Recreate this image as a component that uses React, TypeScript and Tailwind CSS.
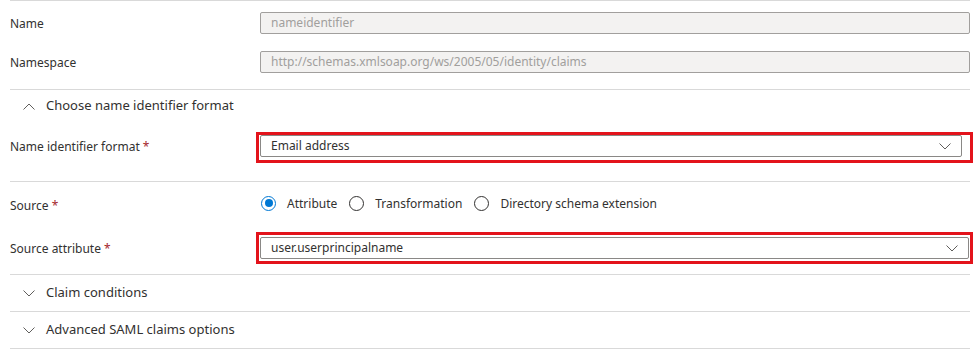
import React from "react";

const font = { fontFamily: '"Noto Sans", "Open Sans", sans-serif' };

function ChevronDown({ className = "" }: { className?: string }) {
  return (
    <svg className={className} width="12" height="7" viewBox="0 0 12 7" fill="none">
      <path d="M0.5 0.5 L6 6 L11.5 0.5" stroke="currentColor" strokeWidth="1" />
    </svg>
  );
}

function ChevronUp({ className = "" }: { className?: string }) {
  return (
    <svg className={className} width="12" height="7" viewBox="0 0 12 7" fill="none">
      <path d="M0.5 6.5 L6 1 L11.5 6.5" stroke="currentColor" strokeWidth="1" />
    </svg>
  );
}

function Label({ text, required = false, className = "" }: { text: string; required?: boolean; className?: string }) {
  return (
    <div className={"w-[250px] shrink-0 text-[12px] text-[#323130] " + className}>
      {text}
      {required && <span className="text-[#a4262c]"> *</span>}
    </div>
  );
}

function DisabledInput({ value }: { value: string }) {
  return (
    <div className="flex h-[22px] flex-1 items-center rounded-[2px] border border-[#a19f9d] bg-[#f3f2f1] px-[10px] text-[12px] text-[#a19f9d]">
      {value}
    </div>
  );
}

function Radio({ label, checked = false }: { label: string; checked?: boolean }) {
  return (
    <div className="flex items-center">
      <div
        className={
          checked
            ? "flex h-[15px] w-[15px] items-center justify-center rounded-full border border-[#0078d4]"
            : "h-[15px] w-[15px] rounded-full border border-[#323130]"
        }
      >
        {checked && <div className="h-[8px] w-[8px] rounded-full bg-[#0078d4]" />}
      </div>
      <span className="ml-[11px] pt-[1px] text-[12px] text-[#323130]">{label}</span>
    </div>
  );
}

function Divider() {
  return <div className="h-px w-full bg-[#d9d9d9]" />;
}

function Expander({ text, open = false }: { text: string; open?: boolean }) {
  return (
    <div className="flex h-[32px] items-center text-[13px] text-[#323130]">
      <div className="flex w-[36px] justify-center pl-[2px] text-[#605e5c]">
        {open ? <ChevronUp /> : <ChevronDown />}
      </div>
      <span>{text}</span>
    </div>
  );
}

export default function App() {
  return (
    <div className="h-[352px] w-[980px] bg-white" style={font}>
      <div className="ml-[10px] w-[960px]">
        <Divider />
        <div className="pb-[16px] pt-[11px]">
          <div className="flex items-center">
            <Label text="Name" className="pt-[2px]" />
            <DisabledInput value="nameidentifier" />
          </div>
          <div className="mt-[17px] flex items-center">
            <Label text="Namespace" className="pt-[1px]" />
            <DisabledInput value="http://schemas.xmlsoap.org/ws/2005/05/identity/claims" />
          </div>
        </div>
        <Divider />
        <Expander text="Choose name identifier format" open />
        <div className="mt-[13px] flex items-center pb-[24px]">
          <Label text="Name identifier format" required className="pt-[2px]" />
          <div className="relative flex-1 pr-[8px]">
            <div className="flex h-[22px] items-center justify-between rounded-[2px] border border-[#8a8886] bg-white pl-[10px] pr-[10px] text-[12px] text-[#323130]">
              <span>Email address</span>
              <ChevronDown className="text-[#605e5c]" />
            </div>
            <div className="pointer-events-none absolute bottom-[-6px] left-[-4px] right-[-3px] top-[-3px] border-[3px] border-[#e3131b]" />
          </div>
        </div>
        <Divider />
        <div className="pb-[15px] pt-[10px]">
          <div className="flex h-[22px] items-center">
            <Label text="Source" required className="pt-[6px]" />
            <div className="flex items-center gap-[12px] pl-[1px]">
              <Radio label="Attribute" checked />
              <Radio label="Transformation" />
              <Radio label="Directory schema extension" />
            </div>
          </div>
          <div className="mt-[23px] flex items-center">
            <Label text="Source attribute" required className="pt-[1px]" />
            <div className="relative flex-1 pr-[1px]">
              <div className="flex h-[22px] items-center justify-between rounded-[2px] border border-[#8a8886] bg-white pl-[10px] pr-[10px] text-[12px] text-[#323130]">
                <span>user.userprincipalname</span>
                <ChevronDown className="text-[#605e5c]" />
              </div>
              <div className="pointer-events-none absolute bottom-[-5px] left-[-4px] right-[-3px] top-[-5px] border-[3px] border-[#e3131b]" />
            </div>
          </div>
        </div>
        <Divider />
        <div className="flex h-[36px] items-center">
          <div className="w-full">
            <Expander text="Claim conditions" />
          </div>
        </div>
        <Divider />
        <div className="flex h-[36px] items-center">
          <div className="w-full">
            <Expander text="Advanced SAML claims options" />
          </div>
        </div>
        <Divider />
      </div>
    </div>
  );
}
